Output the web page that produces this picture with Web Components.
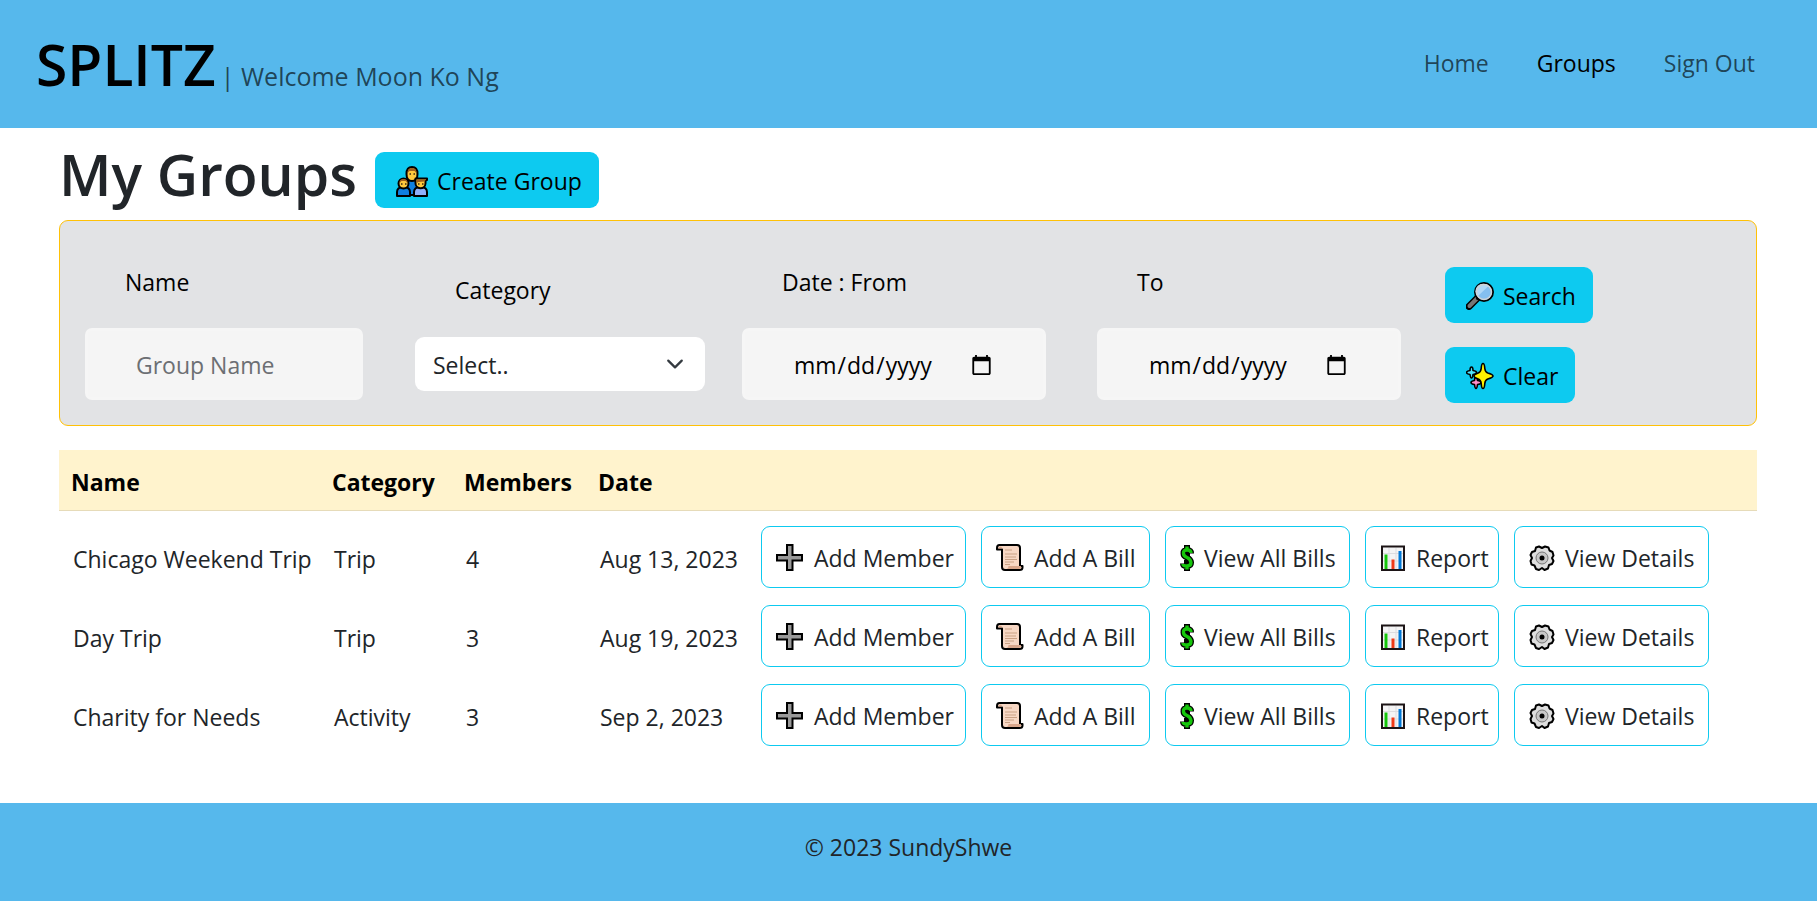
<!DOCTYPE html>
<html lang="en">
<head>
<meta charset="utf-8">
<title>SPLITZ - My Groups</title>
<style>
  body {
    margin: 0;
    font-family: "Open Sans", "Noto Sans", sans-serif;
    font-size: 23px;
    line-height: 36px;
    color: #212529;
    background: #fff;
  }
</style>
</head>
<body>
<splitz-app></splitz-app>

<script>
const ICONS = {
  family: [32, 32, `
    <g stroke="#000" stroke-width="2" stroke-linejoin="round">
      <path d="M9 30V20q0-5 7-5t7 5v10z" fill="#0f7fe0"/>
      <path d="M10.500 9q0-7 5.500-7t5.500 7q0 7-5.500 7t-5.500-7z" fill="#ffc83d"/>
      <path d="M1 31v-4q0-5 6.500-5t6.500 5v4z" fill="#0f7fe0"/>
      <path d="M18 31v-4q0-5 6.500-5t6.500 5v4z" fill="#8fb0fb"/>
      <circle cx="7.500" cy="18.500" r="5" fill="#ffc83d"/>
      <path d="M19.500 18v-4.500H31v1.500l-1.500 1v2.500a5 5 0 0 1-10-.5z" fill="#ffc83d"/>
    </g>
    <path d="M11.500 8q0-5 4.500-5t4.500 5l-2-2h-5zM3.500 18q0-4 4-4t4 4l-2-2h-4zM20.500 18v-3.500H30l-1.500 2-6 .5z" fill="#a0601c"/>
    <path d="M13.500 9h1.500M17.500 9h1.500M5 19h1.500M9 19h1.500M22 19h1.500M26 19h1.500" stroke="#3b2a10" stroke-width="1.500"/>`],
  search: [28, 28, `
    <path d="M3 24.500L11.500 16" stroke="#000" stroke-width="7" stroke-linecap="round"/>
    <path d="M3.500 24L11.500 16" stroke="#767676" stroke-width="4" stroke-linecap="round"/>
    <path d="M10.500 17.500l3-3" stroke="#000" stroke-width="2"/>
    <circle cx="18" cy="10" r="9" fill="#84bff0" stroke="#000" stroke-width="2"/>
    <path d="M11.500 14.500A7.500 7.500 0 0 1 22.500 4z" fill="#b0d8f7"/>
    <circle cx="18" cy="10" r="7.500" fill="none" stroke="#cfd3d6" stroke-width="1.500"/>`],
  sparkle: [28, 28, `
    <g stroke="#000" stroke-width="1.600" stroke-linejoin="round">
      <path d="M5.500 5q1.500 0 1.500 3.500 3.500.5 3.500 2t-3.500 2q-.5 3.500-1.500 3.500t-1.500-3.500q-3.500-.5-3.500-2t3.500-2q0-3.500 1.500-3.500z" fill="#50e6ff"/>
      <path d="M10 15q1.500 0 1.500 3.500 3.500.5 3.500 2t-3.500 2q-.5 4-1.500 4t-1.500-4q-3.500-.5-3.500-2t3.500-2q0-3.500 1.500-3.500z" fill="#ff8cc6"/>
      <path d="M17 1.500q1.500 0 1.800 5 .3 3.500 3 4.500 5.200 1.500 5.200 3t-5.200 3q-2.700 1-3 4.500-.3 5-1.800 5t-1.800-5q-.3-3.500-3-4.500-4.200-1.500-4.200-3t4.200-3q2.700-1 3-4.500.3-5 1.800-5z" fill="#fff100"/>
    </g>`],
  plus: [28, 28, `<path d="M11 1h5.500v10H26v5.500h-9.500V26H11v-9.500H1V11h10z" fill="#999" stroke="#000" stroke-width="2"/>`],
  scroll: [28, 28, `
    <path d="M3.500 1H21q3 0 3 3v18h2.500v1.500q0 2.500-3 2.500H9q-3 0-3-3V5.500H1V4q0-3 2.500-3z" fill="#f7d7c4" stroke="#000" stroke-width="2" stroke-linejoin="round"/>
    <path d="M2.500 4.500q0-2 2-2 1.500 0 1.500 2zM11 25q1.500-1 1.500-3H25q0 3-2 3z" fill="#d9a78c"/>
    <path d="M9 6h7M9 10h12M9 13h11M9 15.500h12M9 18h9M9 20.500h5" stroke="#c9a184"/>`],
  dollar: [14, 28, `
    <path d="M7 1v26M11 9.500Q11 6 7 6T3.500 9.500Q3.500 12 7 13.500T11 18.500Q11 22 7 22T3 19.500" fill="none" stroke="#000" stroke-width="6"/>
    <path d="M7 2.500V7M7 21v4.500M11 9Q11 6 7 6T3.500 9.500Q3.500 12 7 13.500T11 18.500Q11 22 7 22T3 20" fill="none" stroke="#16c60c" stroke-width="3.400"/>`],
  chart: [26, 28, `
    <path d="M2 2.500h22v23.500H2z" fill="#f4f4f5" stroke="#1c1416" stroke-width="2"/>
    <path d="M3 9.500h20M3 17h20M9 4v21M16 4v21" stroke="#dcdce0"/>
    <path d="M4.500 10.500h3v14.500h-3z" fill="#16c60c"/><path d="M11.500 15.500h3V25h-3z" fill="#f03a17"/><path d="M18.500 7h3v18h-3z" fill="#0078d7"/>`],
  gear: [26, 28, `
    <path d="M10 2.500l3 1.500 3-1.500 3.500 1 1 3 3 1.500 1 3.500-1.500 2.500 1.500 3-1.500 3-3 1-1 3.500-3.500 1.500-2.500-2-3 2-3-1-1.500-3.500-3-1-1-3.500 1.500-3-1.500-3 1.500-3 3-1 1-3.500z" fill="#dedede" stroke="#000" stroke-width="2" stroke-linejoin="round"/>
    <circle cx="13" cy="14" r="6" fill="#c8c8c8" stroke="#777"/><circle cx="13" cy="14" r="2.500" fill="#000"/>`]
};

function define(name, html) {
  const template = document.createElement('template');
  template.innerHTML = html;
  customElements.define(name, class extends HTMLElement {
    constructor() {
      super();
      this.attachShadow({ mode: 'open' }).append(template.content.cloneNode(true));
    }
  });
}

class EmojiIcon extends HTMLElement {
  connectedCallback() {
    const [w, h, body] = ICONS[this.getAttribute('name')];
    const root = this.shadowRoot || this.attachShadow({ mode: 'open' });
    root.innerHTML = `<style>:host{display:block;flex:none}svg{display:block}</style>
      <svg width="${w}" height="${h}" viewBox="0 0 ${w} ${h}" fill="none" aria-hidden="true">${body}</svg>`;
  }
}
customElements.define('emoji-icon', EmojiIcon);

/* Solid buttons start an action on the page; outlined ones act on one group. */
class ActionButton extends HTMLElement {
  connectedCallback() {
    const root = this.shadowRoot || this.attachShadow({ mode: 'open' });
    root.innerHTML = `<style>
      :host { display: block; flex: none; }
      button {
        display: flex; align-items: center; gap: 9px; height: 56px; padding: 2px 17px 0 21px;
        font: inherit; color: #000; white-space: nowrap; cursor: pointer;
        background: #0dcaf0; border: 0; border-radius: 9px;
      }
      :host([outline]) button {
        width: 100%; height: 62px; gap: 10px; padding: 2px 0 0 14px; color: #212529;
        background: #fff; border: 1px solid #0dcaf0;
      }
    </style><button type="button"><emoji-icon name="${this.getAttribute('icon')}"></emoji-icon><slot></slot></button>`;
  }
}
customElements.define('action-button', ActionButton);

define('app-header', `<style>
  :host { display: flex; align-items: center; justify-content: space-between; height: 128px;
    padding: 0 62px 0 36px; background: #56b8ec; }
  .brand { display: flex; align-items: baseline; gap: 5px; color: rgba(0,0,0,.65); font-size: 25px; }
  .brand a { font-size: 57px; line-height: 72px; font-weight: 600; color: #000; text-decoration: none; }
  nav { display: flex; gap: 48px; padding-bottom: 3px; }
  nav a { color: rgba(0,0,0,.65); text-decoration: none; }
  nav a[aria-current] { color: #000; }
</style>
<div class="brand"><a href="#">SPLITZ</a><span>| Welcome Moon Ko Ng</span></div>
<nav><a href="#">Home</a><a href="#" aria-current="page">Groups</a><a href="#">Sign Out</a></nav>`);

define('group-search', `<style>
  :host { display: block; }
  form { display: grid; grid-template-columns: 330fr 327fr 355fr 348fr 311fr; height: 204px;
    padding-left: 25px; background: #e2e3e5; border: 1px solid #ffc107; border-radius: 9px; }
  .field { display: flex; flex-direction: column; align-items: flex-start; gap: 28px; padding-top: 43px; color: #000; }
  .field label { padding-left: 40px; }
  input { box-sizing: border-box; width: 304px; height: 72px; margin: 0; padding: 2px 48px 0; font: inherit; color: #000;
    background: #f5f5f5; border: 3px solid #f6f6f6; border-radius: 7px; }
  input[type=text] { width: 278px; }
  input::placeholder { color: #6c6f73; opacity: 1; }
  .pick { gap: 29px; padding-top: 51px; }
  select { box-sizing: border-box; width: 290px; height: 54px; padding: 2px 18px 0; font: inherit; color: #212529;
    appearance: none; border: 0; border-radius: 9px;
    background: #fff url("data:image/svg+xml,%3Csvg xmlns='http://www.w3.org/2000/svg' viewBox='0 0 16 16'%3E%3Cpath fill='none' stroke='%23343a40' stroke-linecap='round' stroke-linejoin='round' stroke-width='2' d='m2 5 6 6 6-6'/%3E%3C/svg%3E") no-repeat right 21px center / 18px 18px; }
  .actions { display: flex; flex-direction: column; align-items: flex-start; gap: 24px; padding-top: 46px; }
</style>
<form>
  <div class="field"><label for="name">Name</label><input id="name" type="text" placeholder="Group Name"></div>
  <div class="field pick"><label for="category">Category</label><select id="category"><option>Select..</option><option>Trip</option><option>Activity</option></select></div>
  <div class="field"><label for="from">Date : From</label><input id="from" type="date"></div>
  <div class="field"><label for="to">To</label><input id="to" type="date"></div>
  <div class="actions"><action-button icon="search">Search</action-button><action-button icon="sparkle">Clear</action-button></div>
</form>`);

class GroupTable extends HTMLElement {
  connectedCallback() {
    const groups = [
      ['Chicago Weekend Trip', 'Trip', 4, 'Aug 13, 2023'],
      ['Day Trip', 'Trip', 3, 'Aug 19, 2023'],
      ['Charity for Needs', 'Activity', 3, 'Sep 2, 2023']
    ];
    const actions = [['plus', 'Add Member'], ['scroll', 'Add A Bill'], ['dollar', 'View All Bills'], ['chart', 'Report'], ['gear', 'View Details']];
    const buttons = actions.map(([icon, text]) => `<action-button outline icon="${icon}">${text}</action-button>`).join('');
    const root = this.shadowRoot || this.attachShadow({ mode: 'open' });
    root.innerHTML = `<style>
      :host { display: block; }
      table { width: 100%; table-layout: fixed; border-collapse: separate; border-spacing: 0; }
      .c-name { width: 261px; } .c-category { width: 132px; } .c-members { width: 134px; } .c-date { width: 161px; }
      th { height: 57px; padding: 3px 12px 0; text-align: left; font-weight: 700; color: #000;
        background: #fff3cd; border-bottom: 1px solid #e6dbb9; }
      td { padding: 17px 0 0 14px; white-space: nowrap; }
      td:last-child { padding: 15px 0 2px 14px; }
      .actions { display: grid; grid-template-columns: 205px 169px 185px 134px 195px; gap: 15px; }
    </style>
    <table>
      <colgroup><col class="c-name"><col class="c-category"><col class="c-members"><col class="c-date"><col></colgroup>
      <thead><tr><th>Name</th><th>Category</th><th>Members</th><th>Date</th><th></th></tr></thead>
      <tbody>${groups.map(g => `<tr>${g.map(v => `<td>${v}</td>`).join('')}<td><div class="actions">${buttons}</div></td></tr>`).join('')}</tbody>
    </table>`;
  }
}
customElements.define('group-table', GroupTable);

define('app-footer', `<style>
  :host { display: flex; flex: 1; align-items: flex-start; justify-content: center; padding: 26px 0 36px; background: #56b8ec; }
</style><slot></slot>`);

define('splitz-app', `<style>
  :host { display: flex; flex-direction: column; min-height: 100vh; }
  main { padding: 12px 60px 55px 59px; }
  .title { display: flex; align-items: flex-start; gap: 18px; }
  .title action-button { padding-top: 12px; }
  h1 { margin: 0; font-size: 57px; line-height: 68px; font-weight: 600; }
  group-search { margin: 12px 0 24px; }
</style>
<app-header></app-header>
<main>
  <div class="title"><h1>My Groups</h1><action-button icon="family">Create Group</action-button></div>
  <group-search></group-search>
  <group-table></group-table>
</main>
<app-footer>© 2023 SundyShwe</app-footer>`);
</script>
</body>
</html>
